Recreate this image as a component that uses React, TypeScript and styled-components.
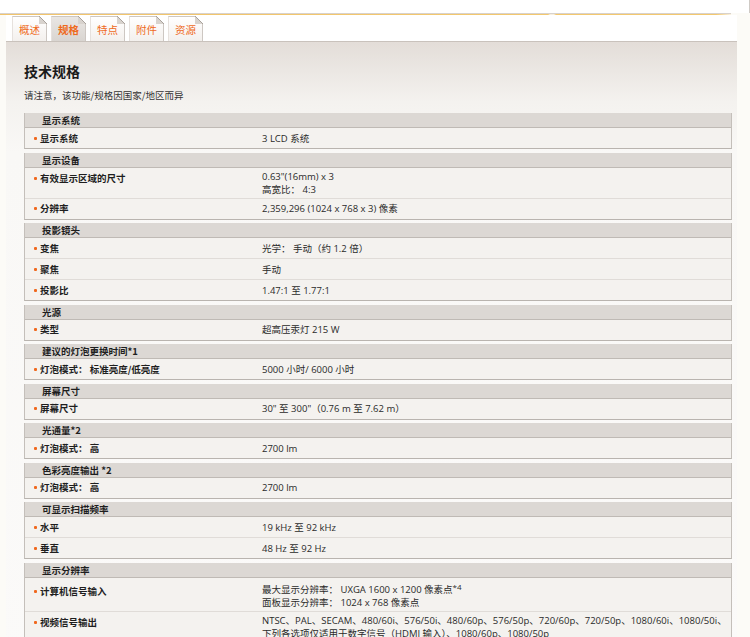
import React from 'react';
import styled, { createGlobalStyle, css } from 'styled-components';

const GlobalStyle = createGlobalStyle`
  html, body { margin: 0; padding: 0; }
  body {
    background: #fcfbf7;
    font-family: "Noto Sans CJK SC", "Noto Sans", sans-serif;
    color: #222;
  }
`;

type SpecValue = { text: string; note?: string };
type SpecRow = { label: string; values: SpecValue[] };
type SpecGroup = { title: string; rows: SpecRow[] };

const v = (text: string, note?: string): SpecValue => ({ text, note });

const groups: SpecGroup[] = [
  { title: '显示系统', rows: [{ label: '显示系统', values: [v('3 LCD 系统')] }] },
  {
    title: '显示设备',
    rows: [
      { label: '有效显示区域的尺寸', values: [v('0.63"(16mm) x 3'), v('高宽比： 4:3')] },
      { label: '分辨率', values: [v('2,359,296 (1024 x 768 x 3) 像素')] },
    ],
  },
  {
    title: '投影镜头',
    rows: [
      { label: '变焦', values: [v('光学： 手动（约 1.2 倍）')] },
      { label: '聚焦', values: [v('手动')] },
      { label: '投影比', values: [v('1.47:1 至 1.77:1')] },
    ],
  },
  { title: '光源', rows: [{ label: '类型', values: [v('超高压汞灯 215 W')] }] },
  {
    title: '建议的灯泡更换时间*1',
    rows: [{ label: '灯泡模式： 标准亮度/低亮度', values: [v('5000 小时/ 6000 小时')] }],
  },
  { title: '屏幕尺寸', rows: [{ label: '屏幕尺寸', values: [v('30" 至 300"（0.76 m 至 7.62 m）')] }] },
  { title: '光通量*2', rows: [{ label: '灯泡模式： 高', values: [v('2700 lm')] }] },
  { title: '色彩亮度输出 *2', rows: [{ label: '灯泡模式： 高', values: [v('2700 lm')] }] },
  {
    title: '可显示扫描频率',
    rows: [
      { label: '水平', values: [v('19 kHz 至 92 kHz')] },
      { label: '垂直', values: [v('48 Hz 至 92 Hz')] },
    ],
  },
  {
    title: '显示分辨率',
    rows: [
      {
        label: '计算机信号输入',
        values: [v('最大显示分辨率： UXGA 1600 x 1200 像素点', '*4'), v('面板显示分辨率： 1024 x 768 像素点')],
      },
      {
        label: '视频信号输出',
        values: [
          v('NTSC、PAL、SECAM、480/60i、576/50i、480/60p、576/50p、720/60p、720/50p、1080/60i、1080/50i、'),
          v('下列各选项仅适用于数字信号（HDMI 输入）、1080/60p、1080/50p'),
        ],
      },
    ],
  },
];

const tabs = ['概述', '规格', '特点', '附件', '资源'];

const Page = styled.div`
  width: 750px;
  display: flex;
  flex-direction: column;
`;

const TopStrip = styled.div`
  height: 13px;
  background: #fff;
  border-right: 1px solid #cfcac5;
  box-sizing: border-box;
`;

const AccentLine = styled.div`
  height: 2px;
  width: 731px;
  background: linear-gradient(
    to right,
    #f1c46c 0,
    #f3c86e 548px,
    #f7efe0 550px,
    #f7efe0 554px,
    #f3c86e 556px,
    #f3c86e 716px,
    #fbf3e3 731px
  );
  border-top: 1px solid #d8d2cc;
  box-sizing: border-box;
`;

const Main = styled.div`
  margin-left: 6px;
  width: 731px;
  display: flex;
  flex-direction: column;
`;

const TabBar = styled.div`
  height: 26px;
  background: #fff;
  display: flex;
  align-items: flex-end;
  gap: 4px;
  padding-left: 6px;
`;

const Tab = styled.div<{ $active?: boolean }>`
  position: relative;
  width: 35px;
  height: 25px;
  box-sizing: border-box;
  border: 1px solid #cdc7c2;
  border-bottom: none;
  border-left-color: #e6e1dd;
  background: ${(p) =>
    p.$active
      ? 'linear-gradient(#e9e6e3, #d9d5d1)'
      : 'linear-gradient(#ffffff, #f3f0ed)'};
  color: #ef6a1c;
  font-size: 10.5px;
  font-weight: ${(p) => (p.$active ? 700 : 400)};
  display: flex;
  align-items: center;
  justify-content: center;
  padding-top: 1px;

  &::after {
    content: '';
    position: absolute;
    top: -1px;
    right: -1px;
    width: 8px;
    height: 8px;
    background: linear-gradient(
      to bottom left,
      #ffffff 0,
      #ffffff calc(50% - 0.6px),
      #a9a29c calc(50% - 0.6px),
      #a9a29c calc(50% + 0.6px),
      #d8d3ce calc(50% + 0.6px)
    );
  }
`;

const Panel = styled.div`
  border-top: 1px solid #c9c2bc;
  background: linear-gradient(#e3ddd8 0, #f4f2ef 60px, #f9f8f6 110px, #fbfaf9 100%);
  padding: 19px 5px 30px 18px;
  display: flex;
  flex-direction: column;
`;

const Title = styled.h1`
  margin: 0;
  font-size: 14px;
  line-height: 20px;
  font-weight: 700;
  color: #1a1a1a;
`;

const Note = styled.p`
  margin: 7px 0 11px;
  font-size: 9.5px;
  line-height: 14px;
  color: #333;
`;

const Groups = styled.div`
  display: flex;
  flex-direction: column;
  gap: 3.5px;
`;

const Group = styled.section`
  border: 1px solid #c4bfba;
  border-top: none;
  border-bottom-color: #b9b4af;
  background: #f4f2ef;
`;

const GroupHeader = styled.div`
  height: 14px;
  line-height: 14px;
  background: #dcd8d4;
  border-bottom: 1px solid #bfbab5;
  padding-left: 17px;
  font-size: 9.5px;
  font-weight: 700;
  color: #1e1e1e;
`;

const Row = styled.div<{ $multi?: boolean }>`
  display: grid;
  grid-template-columns: 228px 1fr;
  padding-left: 9px;
  font-size: 9.5px;
  line-height: 13px;
  & + & {
    border-top: 1px solid #e0dcd8;
  }
  ${(p) =>
    p.$multi
      ? css`
          align-items: baseline;
          padding-top: 2px;
          padding-bottom: 2px;
        `
      : css`
          align-items: center;
          min-height: 20px;
        `}
`;

const Label = styled.div`
  display: flex;
  align-items: center;
  gap: 3px;
  font-weight: 700;
  color: #1e1e1e;
  &::before {
    content: '';
    width: 3px;
    height: 3px;
    border-radius: 1px;
    background: #f0681e;
    flex: none;
  }
`;

const Values = styled.div`
  font-family: "Open Sans", "Noto Sans CJK SC", sans-serif;
  color: #2a2a2a;
  white-space: nowrap;
`;

const ValueLine = styled.div``;

const Sup = styled.sup`
  font-size: 8px;
  line-height: 13px;
  vertical-align: 3px;
`;

export default function App() {
  return (
    <>
      <GlobalStyle />
      <Page>
        <TopStrip />
        <AccentLine />
        <Main>
          <TabBar>
            {tabs.map((t) => (
              <Tab key={t} $active={t === '规格'}>
                {t}
              </Tab>
            ))}
          </TabBar>
          <Panel>
            <Title>技术规格</Title>
            <Note>请注意，该功能/规格因国家/地区而异</Note>
            <Groups>
              {groups.map((g) => (
                <Group key={g.title}>
                  <GroupHeader>{g.title}</GroupHeader>
                  {g.rows.map((r) => (
                    <Row key={r.label} $multi={r.values.length > 1}>
                      <Label>{r.label}</Label>
                      <Values>
                        {r.values.map((val) => (
                          <ValueLine key={val.text}>
                            {val.text}
                            {val.note && <Sup>{val.note}</Sup>}
                          </ValueLine>
                        ))}
                      </Values>
                    </Row>
                  ))}
                </Group>
              ))}
            </Groups>
          </Panel>
        </Main>
      </Page>
    </>
  );
}
